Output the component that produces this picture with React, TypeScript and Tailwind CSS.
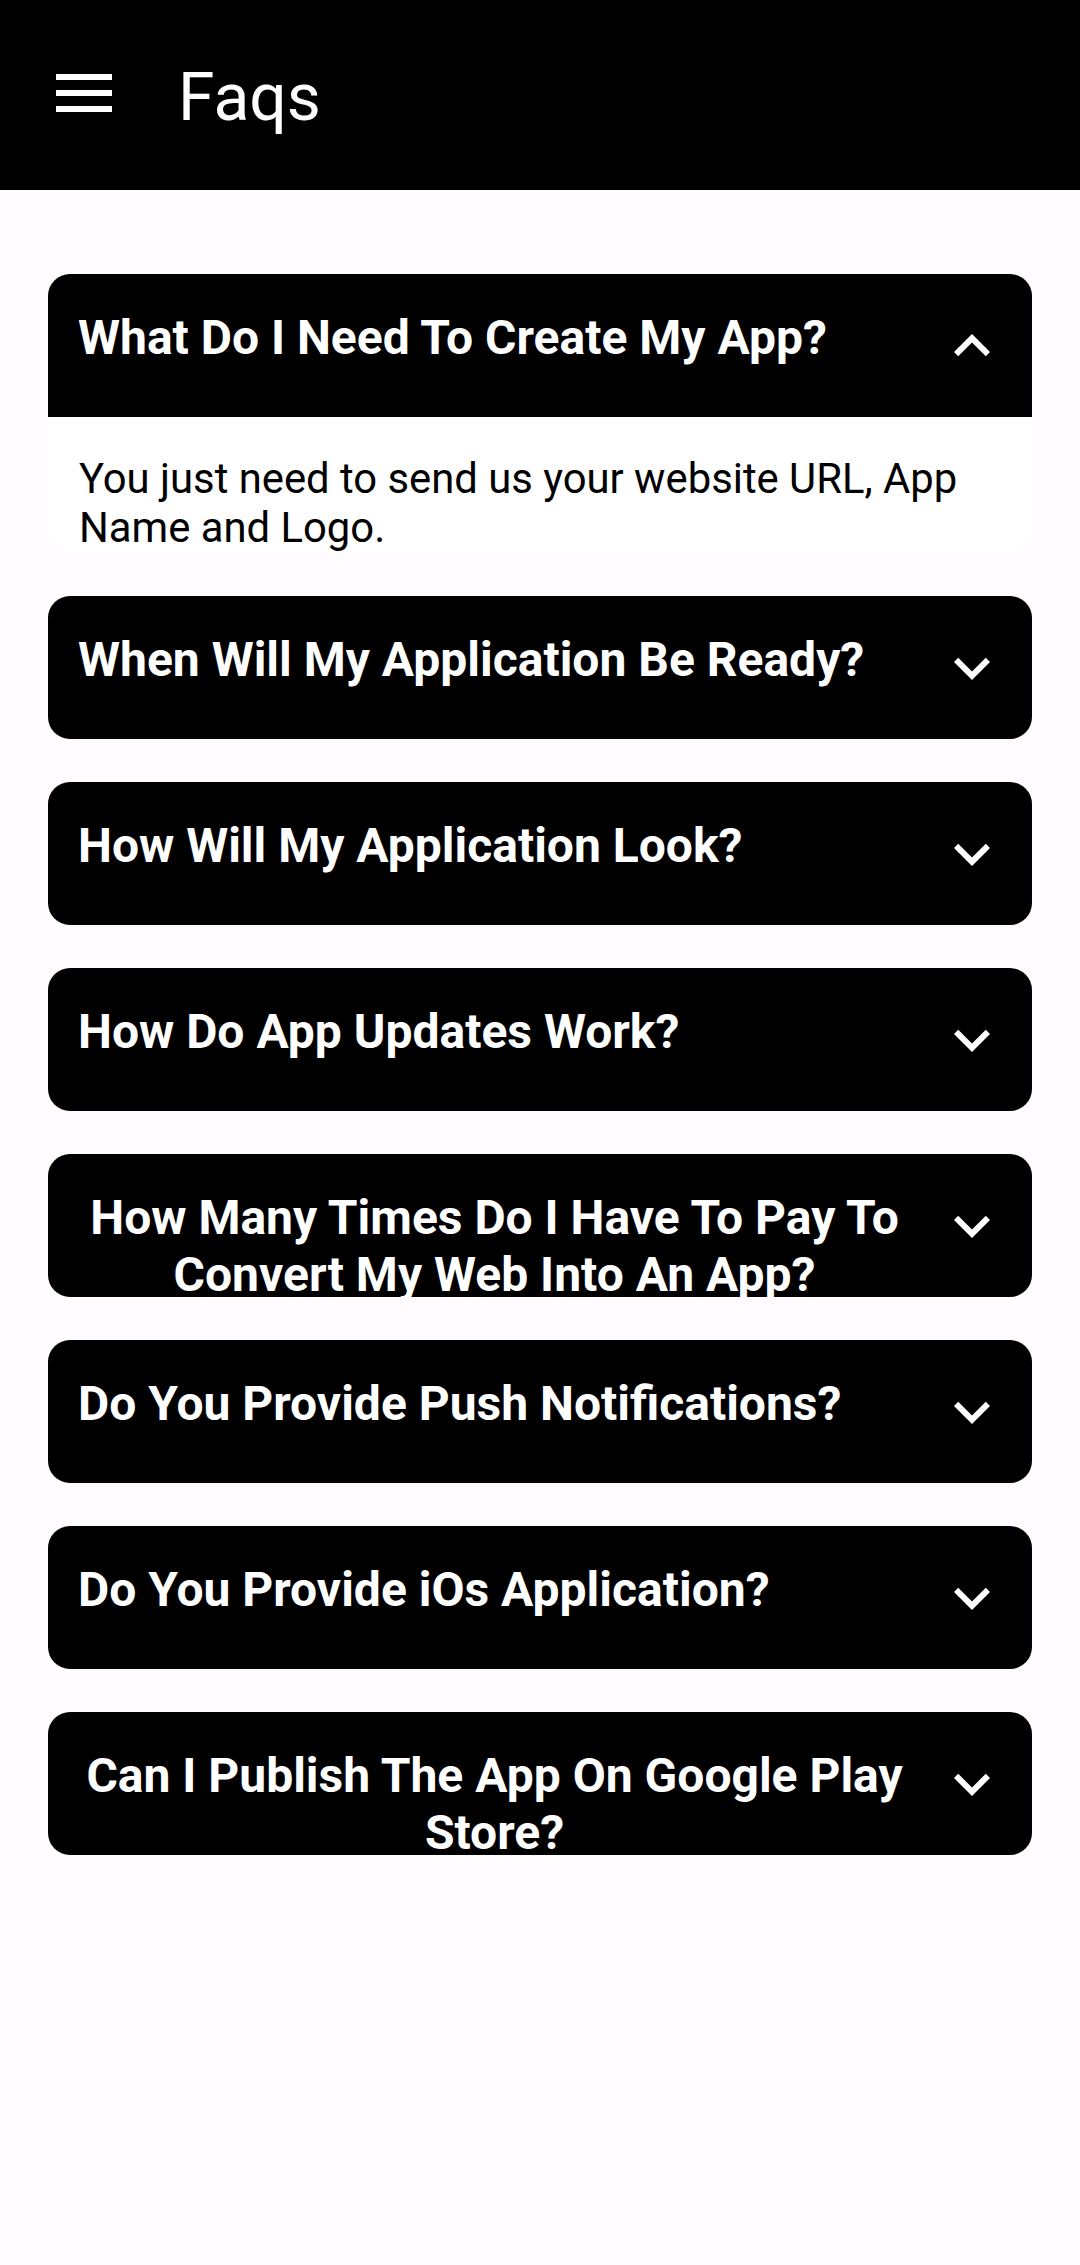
import React from "react";

const faqs = [
  "What Do I Need To Create My App?",
  "When Will My Application Be Ready?",
  "How Will My Application Look?",
  "How Do App Updates Work?",
  "How Many Times Do I Have To Pay To Convert My Web Into An App?",
  "Do You Provide Push Notifications?",
  "Do You Provide iOs Application?",
  "Can I Publish The App On Google Play Store?",
];

function Chevron({ up }: { up: boolean }) {
  return (
    <svg width="72" height="72" viewBox="0 0 24 24" fill="white">
      {up ? (
        <path d="M12 8l-6 6 1.41 1.41L12 10.83l4.59 4.58L18 14z" />
      ) : (
        <path d="M16.59 8.59L12 13.17 7.41 8.59 6 10l6 6 6-6z" />
      )}
    </svg>
  );
}

export default function App() {
  return (
    <div
      className="min-h-screen bg-[#fffbfe]"
      style={{ fontFamily: "Roboto, 'Noto Sans', sans-serif" }}
    >
      <header className="h-[190px] bg-black flex items-start">
        <div className="pl-[56px] pt-[74px] flex flex-col gap-[10px]">
          <div className="w-[56px] h-[6px] bg-white" />
          <div className="w-[56px] h-[6px] bg-white" />
          <div className="w-[56px] h-[6px] bg-white" />
        </div>
        <h1 className="ml-[66px] pt-[48px] text-[66px] leading-normal text-white font-normal">
          Faqs
        </h1>
      </header>

      <main className="px-[48px] pt-[84px]">
        {faqs.map((q, i) => {
          const open = i === 0;
          return (
            <div key={q} className={open ? "mb-[44px]" : "mb-[43px]"}>
              <div
                className={`h-[143px] bg-black flex items-start pl-[30px] pr-[24px] overflow-hidden ${
                  open ? "rounded-t-[22px]" : "rounded-[22px]"
                }`}
              >
                <div className="w-[833px] shrink-0 pt-[35px]">
                  <p className="w-fit max-w-full text-center text-white font-bold text-[48px] leading-[57px]">
                    {q}
                  </p>
                </div>
                <div className="flex-1" />
                <div className="self-center">
                  <Chevron up={open} />
                </div>
              </div>
              {open && (
                <div className="bg-white rounded-b-[22px] pl-[31px] pr-[24px] pt-[37px] pb-0">
                  <p className="text-black text-[41.8px] leading-[49px]">
                    You just need to send us your website URL, App Name and Logo.
                  </p>
                </div>
              )}
            </div>
          );
        })}
      </main>
    </div>
  );
}
